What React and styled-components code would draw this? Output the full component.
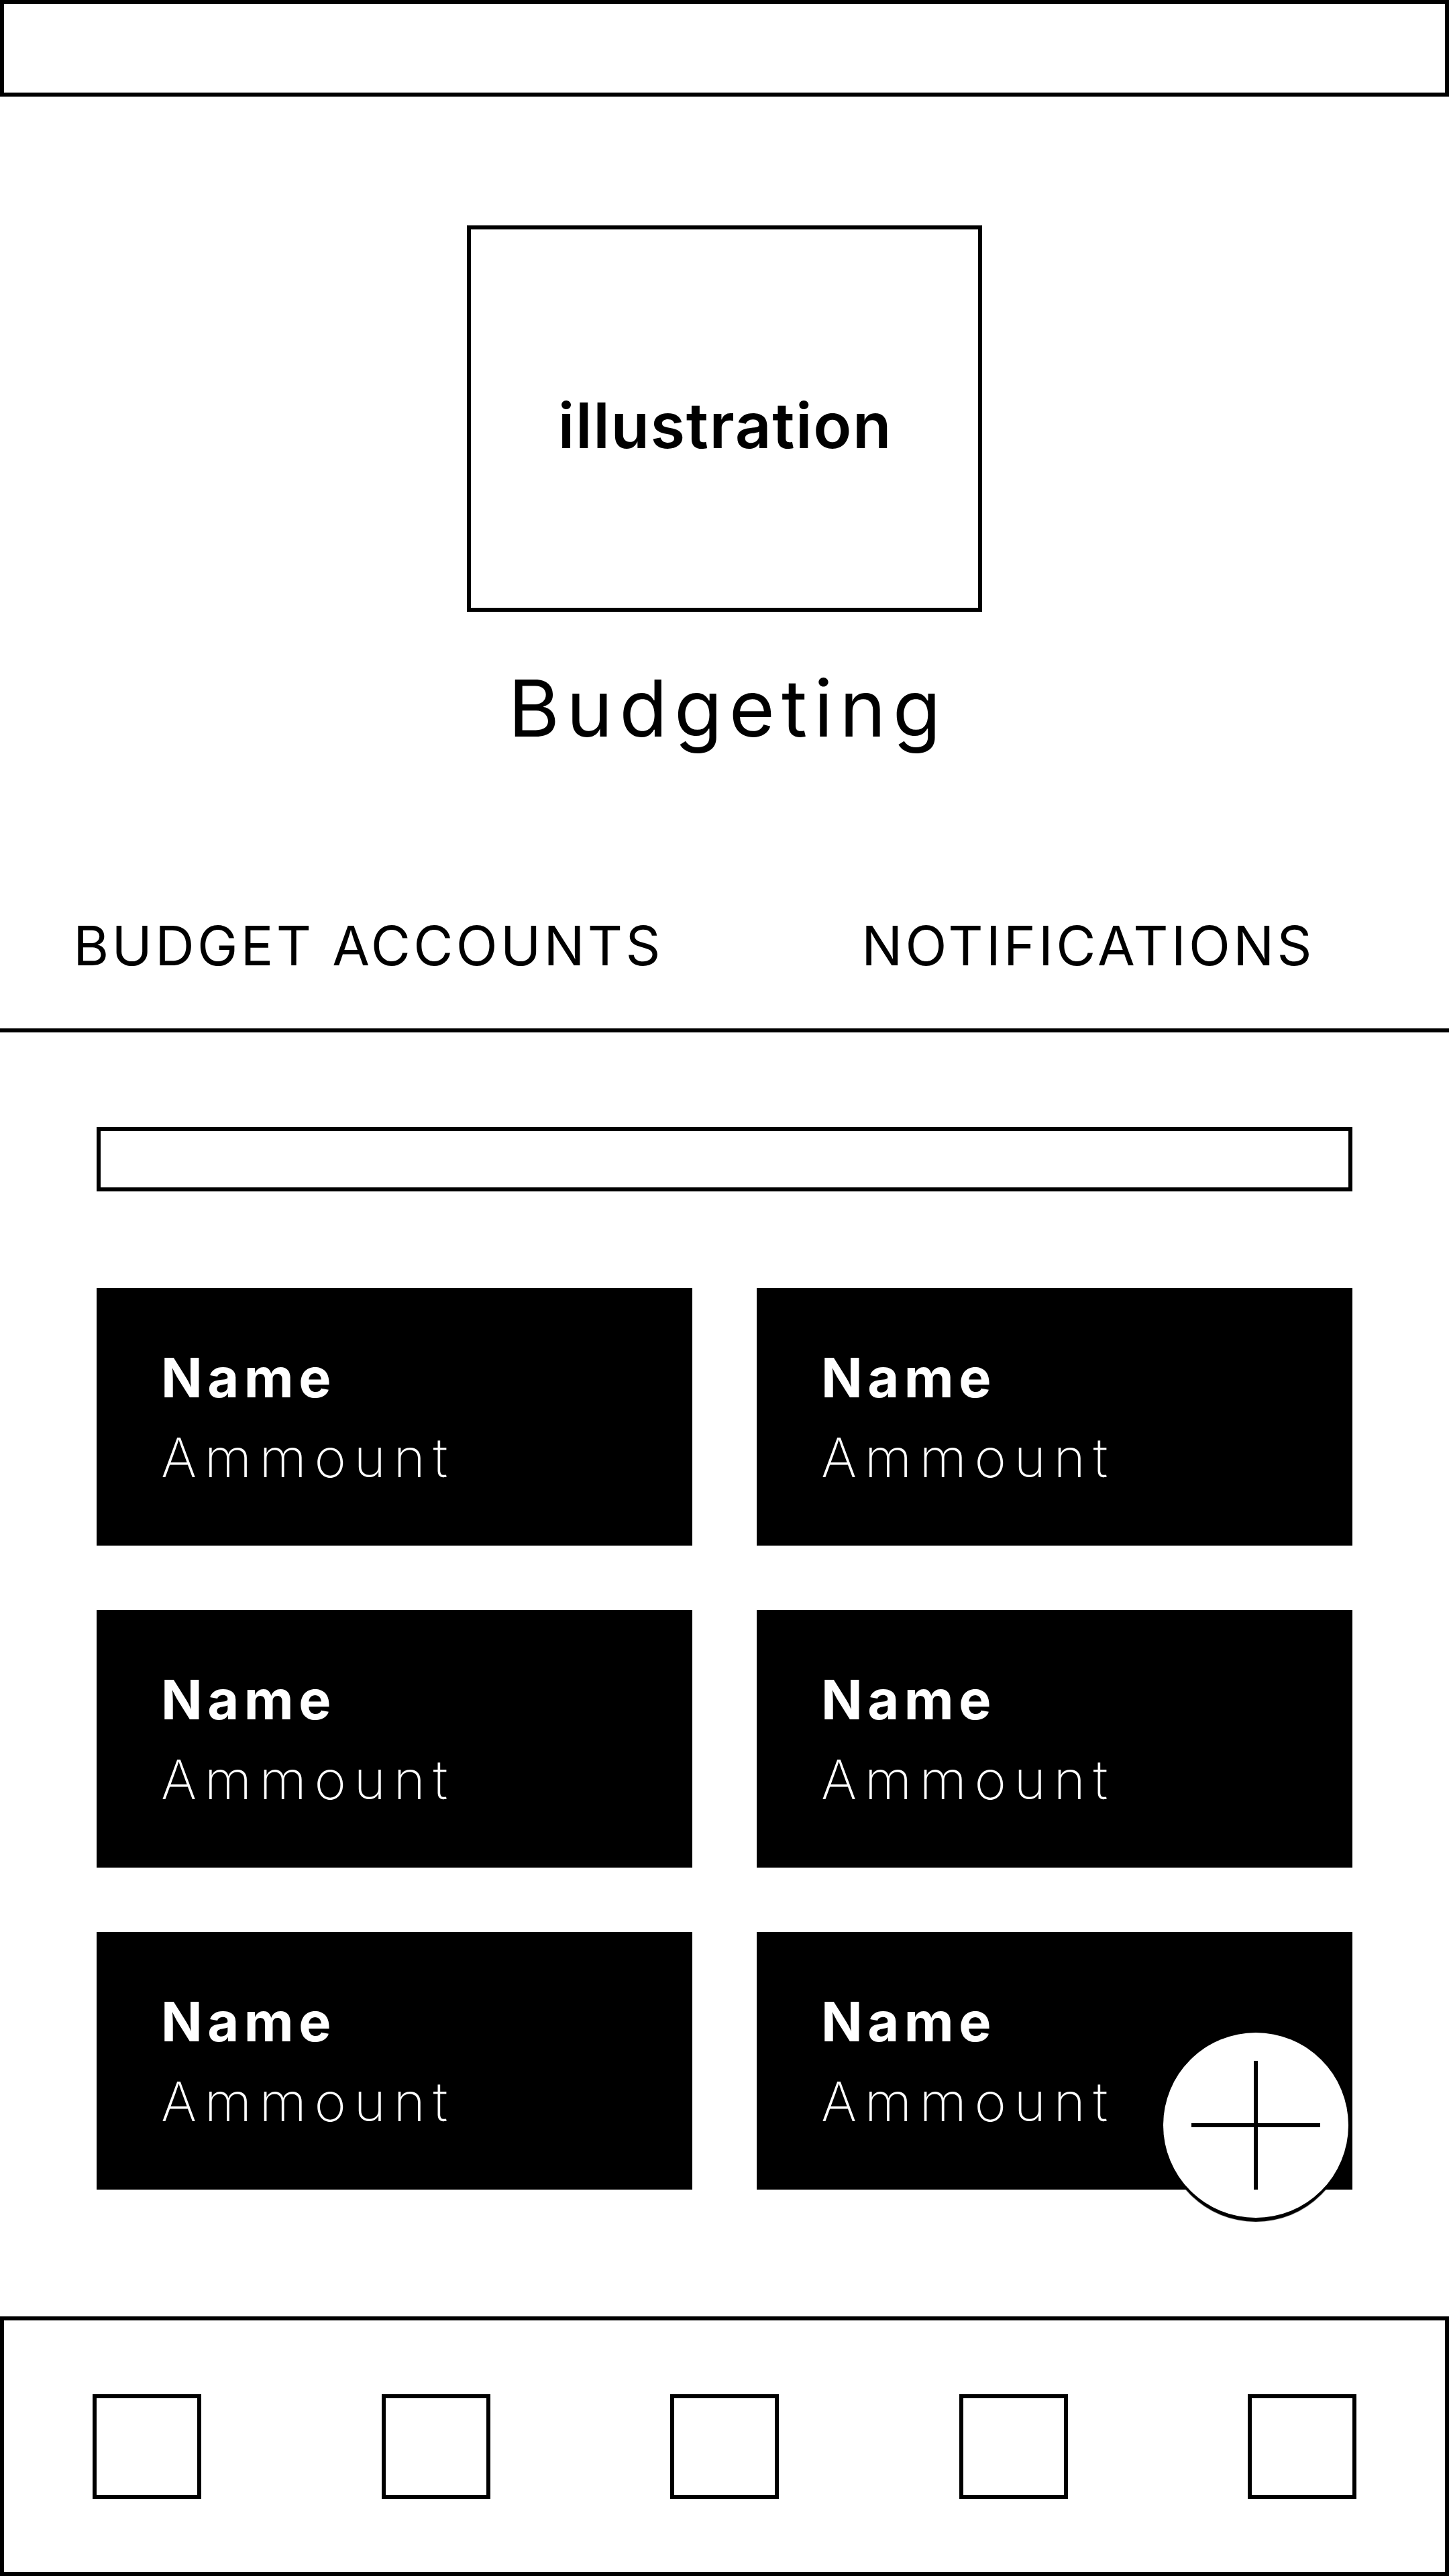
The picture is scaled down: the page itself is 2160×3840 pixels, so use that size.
import styled, { createGlobalStyle } from "styled-components";

const GlobalStyle = createGlobalStyle`
  * {
    box-sizing: border-box;
  }
  body {
    margin: 0;
    background: #fff;
    color: #000;
    font-family: Inter, "Noto Sans", "DejaVu Sans", sans-serif;
  }
`;

const accounts = [
  { name: "Name", amount: "Ammount" },
  { name: "Name", amount: "Ammount" },
  { name: "Name", amount: "Ammount" },
  { name: "Name", amount: "Ammount" },
  { name: "Name", amount: "Ammount" },
  { name: "Name", amount: "Ammount" },
];

const App = () => {
  return (
    <>
      <GlobalStyle />
      <Page>
        <TopBar />
        <Hero>
          <Illustration>illustration</Illustration>
          <Title>Budgeting</Title>
        </Hero>
        <Tabs>
          <Tab $offset={18}>BUDGET ACCOUNTS</Tab>
          <Tab>NOTIFICATIONS</Tab>
        </Tabs>
        <Content>
          <SearchBox />
          <GridWrap>
            <CardGrid>
              {accounts.map((a, i) => (
                <Card key={i}>
                  <CardName>{a.name}</CardName>
                  <CardAmount>{a.amount}</CardAmount>
                </Card>
              ))}
            </CardGrid>
            <AddButton aria-label="Add account">
              <svg width="192" height="192" viewBox="0 0 192 192">
                <line x1="96" y1="0" x2="96" y2="192" stroke="#000" strokeWidth="6" />
                <line x1="0" y1="96" x2="192" y2="96" stroke="#000" strokeWidth="6" />
              </svg>
            </AddButton>
          </GridWrap>
        </Content>
        <BottomNav>
          {[0, 1, 2, 3, 4].map((i) => (
            <NavIcon key={i} />
          ))}
        </BottomNav>
      </Page>
    </>
  );
};

const Page = styled.div`
  width: 100%;
  min-height: 3840px;
  display: flex;
  flex-direction: column;
`;

const TopBar = styled.div`
  height: 144px;
  border: 6px solid #000;
`;

const Hero = styled.div`
  display: flex;
  flex-direction: column;
  align-items: center;
  padding-top: 192px;
`;

const Illustration = styled.div`
  width: 768px;
  height: 576px;
  border: 6px solid #000;
  display: flex;
  align-items: center;
  justify-content: center;
  font-size: 94px;
  font-weight: 600;
  line-height: 1;
  letter-spacing: 1.6px;
  padding: 20px 0 0 2px;
`;

const Title = styled.h1`
  margin: 85px 0 0;
  padding-left: 10px;
  font-size: 117px;
  font-weight: 400;
  line-height: 1;
  letter-spacing: 10px;
`;

const Tabs = styled.div`
  display: grid;
  grid-template-columns: 1fr 1fr;
  margin-top: 256px;
  border-bottom: 6px solid #000;
`;

const Tab = styled.div`
  text-align: center;
  font-size: 81px;
  font-weight: 400;
  line-height: 1;
  letter-spacing: 4.3px;
  padding: 0 0 82px ${(p) => p.$offset ?? 4}px;
`;

const Content = styled.div`
  padding: 141px 144px 0;
`;

const SearchBox = styled.div`
  height: 96px;
  border: 6px solid #000;
`;

const GridWrap = styled.div`
  position: relative;
  margin-top: 144px;
`;

const CardGrid = styled.div`
  display: grid;
  grid-template-columns: 1fr 1fr;
  gap: 96px;
`;

const Card = styled.div`
  height: 384px;
  background: #000;
  color: #fff;
  padding: 94px 0 0 96px;
  display: flex;
  flex-direction: column;
  gap: 38px;
`;

const CardName = styled.div`
  font-size: 81px;
  font-weight: 700;
  line-height: 1;
  letter-spacing: 7.5px;
`;

const CardAmount = styled.div`
  font-size: 81px;
  font-weight: 200;
  line-height: 1;
  letter-spacing: 11.5px;
`;

const AddButton = styled.button`
  position: absolute;
  right: 6px;
  bottom: -42px;
  width: 276px;
  height: 276px;
  border-radius: 50%;
  border: none;
  padding: 0;
  background: #fff;
  box-shadow: 0 6px 1px #000;
  display: flex;
  align-items: center;
  justify-content: center;
  cursor: pointer;
`;

const BottomNav = styled.nav`
  margin-top: auto;
  height: 387px;
  border: 6px solid #000;
  display: flex;
  align-items: center;
  justify-content: space-between;
  padding: 0 132px;
`;

const NavIcon = styled.div`
  width: 162px;
  height: 156px;
  border: 6px solid #000;
`;

export default App;
